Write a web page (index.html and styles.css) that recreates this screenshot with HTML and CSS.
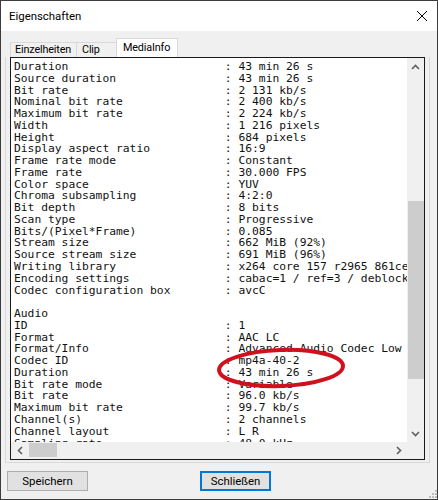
FILE: index.html
```html
<!DOCTYPE html>
<html lang="de">
<head>
    <meta charset="UTF-8">
    <meta name="viewport" content="width=device-width, initial-scale=1.0">
    <title>Eigenschaften</title>
    <link rel="stylesheet" href="styles.css">
</head>
<body>
    <div class="window">
        <div class="titlebar">
            <span class="title">Eigenschaften</span>
            <svg class="close" width="12" height="12" viewBox="0 0 12 12">
                <path d="M1 1L11 11M11 1L1 11" stroke="#000" stroke-width="1" fill="none" />
            </svg>
        </div>
        <div class="content">
            <div class="tabs">
                <div class="tab tab-details">Einzelheiten</div>
                <div class="tab tab-clip">Clip</div>
                <div class="tab tab-media active">MediaInfo</div>
            </div>
            <div class="page">
                <div class="textbox">
                    <pre class="info" id="info"></pre>
                    <div class="vscroll">
                        <div class="arrow">
                            <svg width="9" height="6" viewBox="0 0 9 6"><path d="M1 5L4.5 1.5L8 5" stroke="#606060" stroke-width="1.6" fill="none" /></svg>
                        </div>
                        <div class="vtrack"><div class="vthumb"></div></div>
                        <div class="arrow">
                            <svg width="9" height="6" viewBox="0 0 9 6"><path d="M1 1L4.5 4.5L8 1" stroke="#606060" stroke-width="1.6" fill="none" /></svg>
                        </div>
                    </div>
                    <div class="hscroll">
                        <div class="arrow">
                            <svg width="6" height="9" viewBox="0 0 6 9"><path d="M5 1L1.5 4.5L5 8" stroke="#606060" stroke-width="1.6" fill="none" /></svg>
                        </div>
                        <div class="htrack"><div class="hthumb"></div></div>
                        <div class="arrow">
                            <svg width="6" height="9" viewBox="0 0 6 9"><path d="M1 1L4.5 4.5L1 8" stroke="#606060" stroke-width="1.6" fill="none" /></svg>
                        </div>
                    </div>
                    <div class="corner"></div>
                    <svg class="mark" width="413" height="401">
                        <ellipse cx="270" cy="310" rx="62" ry="18" transform="rotate(-2 270 310)" stroke="#d0101c" stroke-width="4" fill="none" />
                    </svg>
                </div>
            </div>
            <div class="buttons">
                <button class="btn btn-save">Speichern</button>
                <button class="btn btn-close">Schließen</button>
                <svg class="grip" width="9" height="9" viewBox="0 0 9 9">
                    <rect x="7" y="1" width="2" height="2" fill="#bcbcbc" />
                    <rect x="4" y="4" width="2" height="2" fill="#bcbcbc" />
                    <rect x="7" y="4" width="2" height="2" fill="#bcbcbc" />
                    <rect x="1" y="7" width="2" height="2" fill="#bcbcbc" />
                    <rect x="4" y="7" width="2" height="2" fill="#bcbcbc" />
                    <rect x="7" y="7" width="2" height="2" fill="#bcbcbc" />
                </svg>
            </div>
        </div>
    </div>

    <script>
let mediaInfo = [
  ["Duration", "43 min 26 s"],
  ["Source duration", "43 min 26 s"],
  ["Bit rate", "2 131 kb/s"],
  ["Nominal bit rate", "2 400 kb/s"],
  ["Maximum bit rate", "2 224 kb/s"],
  ["Width", "1 216 pixels"],
  ["Height", "684 pixels"],
  ["Display aspect ratio", "16:9"],
  ["Frame rate mode", "Constant"],
  ["Frame rate", "30.000 FPS"],
  ["Color space", "YUV"],
  ["Chroma subsampling", "4:2:0"],
  ["Bit depth", "8 bits"],
  ["Scan type", "Progressive"],
  ["Bits/(Pixel*Frame)", "0.085"],
  ["Stream size", "662 MiB (92%)"],
  ["Source stream size", "691 MiB (96%)"],
  ["Writing library", "x264 core 157 r2965 861cef6"],
  ["Encoding settings", "cabac=1 / ref=3 / deblock=1:0:0 / analyse=0x3:0x113"],
  ["Codec configuration box", "avcC"],
  [""],
  ["Audio"],
  ["ID", "1"],
  ["Format", "AAC LC"],
  ["Format/Info", "Advanced Audio Codec Low Complexity"],
  ["Codec ID", "mp4a-40-2"],
  ["Duration", "43 min 26 s"],
  ["Bit rate mode", "Variable"],
  ["Bit rate", "96.0 kb/s"],
  ["Maximum bit rate", "99.7 kb/s"],
  ["Channel(s)", "2 channels"],
  ["Channel layout", "L R"],
  ["Sampling rate", "48.0 kHz"],
];

let lines = mediaInfo.map(function (row) {
  if (row.length == 1) {
    return row[0];
  }
  return row[0].padEnd(31) + ": " + row[1];
});

document.getElementById("info").textContent = lines.join("\n");
    </script>
</body>
</html>
```

FILE: styles.css
```css
* {
  margin: 0px;
  padding: 0px;
  box-sizing: border-box;
}

body {
  width: 438px;
  height: 500px;
  overflow: hidden;
  background-color: #f0f0f0;
  font-family: Roboto, "Liberation Sans", sans-serif;
  font-size: 11.4px;
  color: #000;
}

.window {
  width: 438px;
  height: 500px;
  border: 1px solid #3c3c3c;
  background-color: #f0f0f0;
  display: flex;
  flex-direction: column;
}

.titlebar {
  height: 30px;
  background-color: #fff;
  display: flex;
  align-items: center;
  justify-content: space-between;
  padding: 0 9px 0 8px;
}

.title {
  font-size: 11.4px;
}

.content {
  flex: 1;
  display: flex;
  flex-direction: column;
  padding: 7px 7px 0 4px;
}

/* tabs */
.tabs {
  display: flex;
  align-items: flex-end;
  height: 19px;
  padding-left: 5px;
}

.tab {
  height: 15px;
  line-height: 14px;
  font-size: 10.8px;
  letter-spacing: -0.15px;
  border: 1px solid #d9d9d9;
  border-bottom: 0;
  border-right: 0;
  padding-left: 4px;
  white-space: nowrap;
}

.tab-details {
  width: 66px;
}

.tab-clip {
  width: 40px;
  padding-left: 5px;
}

.tab.active {
  width: 62px;
  height: 19px;
  line-height: 17px;
  padding-left: 6px;
  border-right: 1px solid #d9d9d9;
  background-color: #fff;
}

.page {
  height: 406px;
  border: 1px solid #d9d9d9;
  border-top: 0;
  padding: 0 4px 2px 4px;
}

/* text box with scrollbars */
.textbox {
  position: relative;
  height: 403px;
  border: 1px solid #1a1a1a;
  background-color: #fff;
  display: grid;
  grid-template-columns: 1fr 17px;
  grid-template-rows: 1fr 17px;
}

.info {
  overflow: hidden;
  padding: 3px 0 0 3px;
  font-family: "DejaVu Sans Mono", "Liberation Mono", monospace;
  font-size: 11.3px;
  line-height: 11.77px;
  white-space: pre;
  color: #111;
}

.vscroll {
  display: flex;
  flex-direction: column;
  background-color: #f0f0f0;
}

.hscroll {
  display: flex;
  background-color: #f0f0f0;
}

.arrow {
  width: 17px;
  height: 17px;
  display: flex;
  align-items: center;
  justify-content: center;
}

.vtrack {
  flex: 1;
  padding-left: 1px;
}

.vthumb {
  margin-top: 126px;
  height: 178px;
  background-color: #cdcdcd;
}

.htrack {
  flex: 1;
  padding-top: 1px;
}

.hthumb {
  margin-left: 1px;
  width: 28px;
  height: 14px;
  background-color: #cdcdcd;
}

.corner {
  background-color: #f0f0f0;
}

.mark {
  position: absolute;
  left: 0;
  top: 0;
  pointer-events: none;
}

/* buttons */
.buttons {
  flex: 1;
  display: flex;
  align-items: flex-start;
  padding-top: 8px;
}

.btn {
  height: 20px;
  font-family: Roboto, "Liberation Sans", sans-serif;
  font-size: 11.4px;
  color: #000;
  background-color: #e1e1e1;
  border: 1px solid #adadad;
}

.btn-save {
  width: 81px;
  margin-left: 2px;
}

.btn-close {
  width: 71px;
  margin-left: 112px;
  border: 2px solid #0078d7;
}

.grip {
  margin-left: auto;
  margin-right: -7px;
  align-self: flex-end;
  margin-bottom: 1px;
}
```
